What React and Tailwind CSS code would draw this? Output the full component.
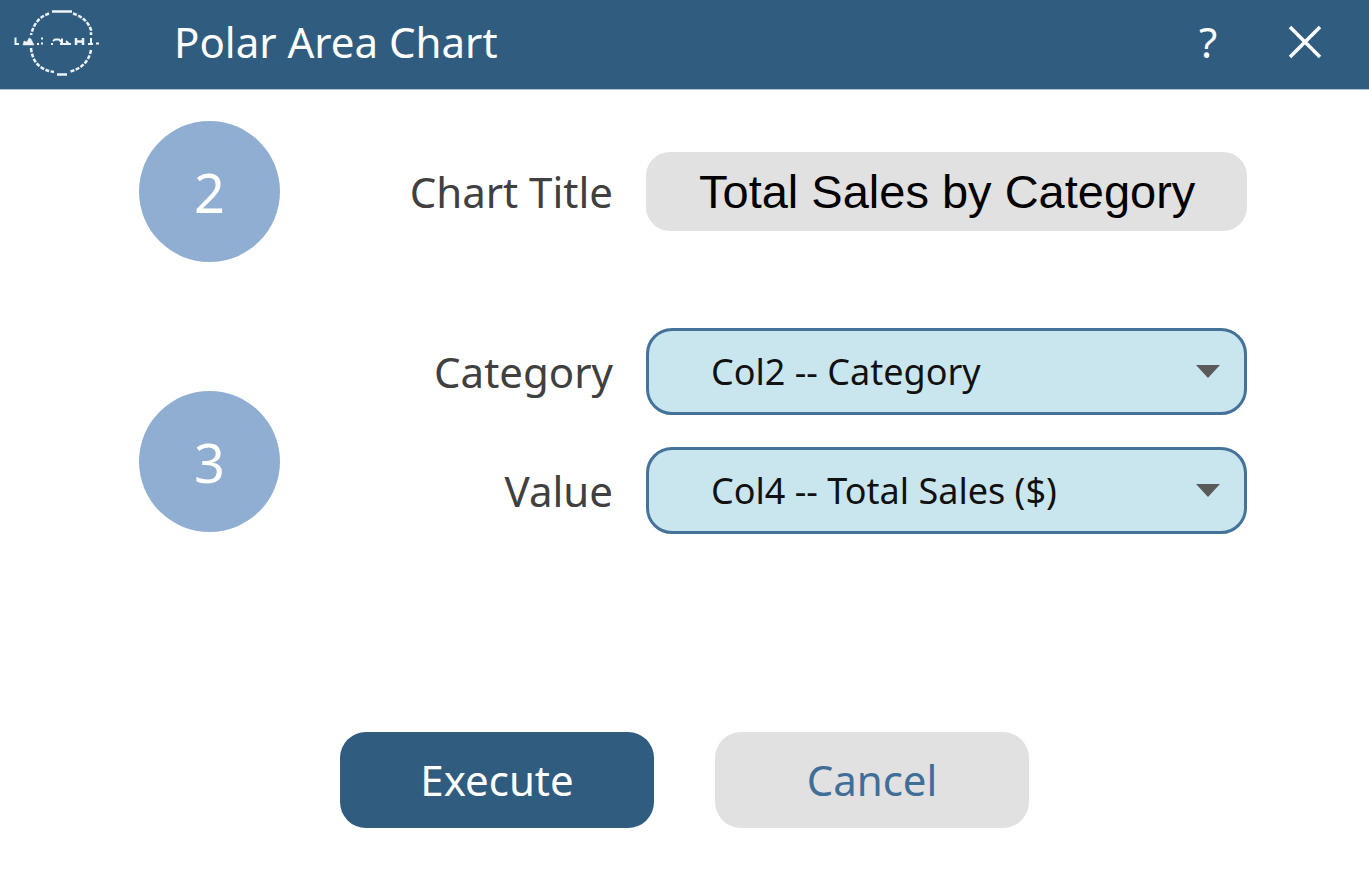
import React, { useState } from 'react';

const columns = ['Col1 -- Region', 'Col2 -- Category', 'Col3 -- Units', 'Col4 -- Total Sales ($)'];

const Logo = () => (
  <svg viewBox="0 0 90 72" className="h-[72px] w-[90px]" fill="none" stroke="#eef3f7" aria-hidden="true">
    <path d="M40 5.500h20" strokeWidth="2.500" />
    <path d="M37 7.500Q23 12 19 29" strokeWidth="2.500" strokeDasharray="4 1.500" />
    <path d="M61 7.500Q75 12 79 24v5" strokeWidth="2.500" strokeDasharray="4 1.500" />
    <path d="M19 42Q21 63 42 66" strokeWidth="2.500" strokeDasharray="4 1.500" />
    <path d="M79 44Q76 61 57 66" strokeWidth="2.500" strokeDasharray="4 1.500" />
    <path d="M45 68.500h10" strokeWidth="2.500" />
    <path d="M3.500 31.500v6.500h3.500" strokeWidth="2" />
    <path d="M11 39l1-4 3 1 2-4 2 1 3 6z" fill="#eef3f7" strokeWidth="0.500" />
    <path d="M25 38h2M29 37.500h2M29 32.500h2M39 38h2" strokeWidth="2" />
    <path d="M41 35l2-1.500h4l3 3M50 32.500v5M48 38h11M54 35l3 3" strokeWidth="2" />
    <path d="M64 32v7M71 32v7M64 35.500h7" strokeWidth="2.500" />
    <path d="M79 32v6M76 38h5M84 37.500h3" strokeWidth="2" />
  </svg>
);

const TitleBar = () => (
  <header className="flex h-[90px] items-center border-b border-[#b5c3d1] bg-[#305c80] pb-[6px] pl-3 pr-11 text-white">
    <Logo />
    <h1 className="ml-[72px] flex-1 text-[42px] leading-none">Polar Area Chart</h1>
    <button type="button" aria-label="Help" className="w-10 text-[42px] leading-none">?</button>
    <button type="button" aria-label="Close" className="ml-[57px]">
      <svg viewBox="0 0 40 40" className="size-10" stroke="currentColor" strokeWidth="3.500">
        <path d="M5 5l30 30M35 5L5 35" />
      </svg>
    </button>
  </header>
);

const Step = ({ number }) => (
  <div className="flex size-[141px] items-center justify-center rounded-full bg-[#90aed2] text-[54px] leading-none text-white">
    {number}
  </div>
);

const Label = ({ htmlFor, children }) => (
  <label htmlFor={htmlFor} className="flex-1 text-right text-[42px] leading-none text-[#404040]">{children}</label>
);

const ColumnSelect = ({ id, label, value, onChange }) => (
  <div className="flex items-center gap-[33px]">
    <Label htmlFor={id}>{label}</Label>
    <div className="relative w-[601px]">
      <select
        id={id}
        value={value}
        onChange={e => onChange(e.target.value)}
        className="h-[87px] w-full appearance-none rounded-[26px] border-3 border-[#45729a] bg-[#c9e6ee] pl-[62px] pr-16 text-[36px] text-[#111111]"
      >
        {columns.map(col => <option key={col} value={col}>{col}</option>)}
      </select>
      <svg viewBox="0 0 24 13" className="pointer-events-none absolute right-[27px] top-[37px] h-[13px] w-6" fill="#5a5a5a">
        <path d="M0 0h24L12 13z" />
      </svg>
    </div>
  </div>
);

const App = () => {
  const [title, setTitle] = useState('Total Sales by Category');
  const [category, setCategory] = useState(columns[1]);
  const [value, setValue] = useState(columns[3]);

  return (
    <div className="min-h-screen bg-white font-['Noto_Sans',sans-serif]">
      <TitleBar />
      <form onSubmit={e => e.preventDefault()} className="pt-[31px]">
        <div className="flex flex-col gap-[66px] pl-[139px] pr-[122px]">
          <section className="flex items-center">
            <Step number={2} />
            <div className="flex flex-1 items-center gap-[33px]">
              <Label htmlFor="title">Chart Title</Label>
              <input
                id="title"
                type="text"
                value={title}
                onChange={e => setTitle(e.target.value)}
                className="h-[79px] w-[601px] rounded-[24px] bg-[#e1e1e1] pl-[53px] pr-8 font-['Liberation_Sans',sans-serif] text-[47px] text-black"
              />
            </div>
          </section>
          <section className="flex items-end">
            <div className="pb-[2px]">
              <Step number={3} />
            </div>
            <div className="flex flex-1 flex-col gap-8">
              <ColumnSelect id="category" label="Category" value={category} onChange={setCategory} />
              <ColumnSelect id="value" label="Value" value={value} onChange={setValue} />
            </div>
          </section>
        </div>
        <div className="mt-[198px] flex justify-center gap-[61px] text-[42px] leading-none">
          <button type="submit" className="h-24 w-[314px] rounded-[26px] bg-[#305c80] text-white">Execute</button>
          <button type="button" className="h-24 w-[314px] rounded-[26px] bg-[#e1e1e1] text-[#3f6e99]">Cancel</button>
        </div>
      </form>
    </div>
  );
};

export default App;
